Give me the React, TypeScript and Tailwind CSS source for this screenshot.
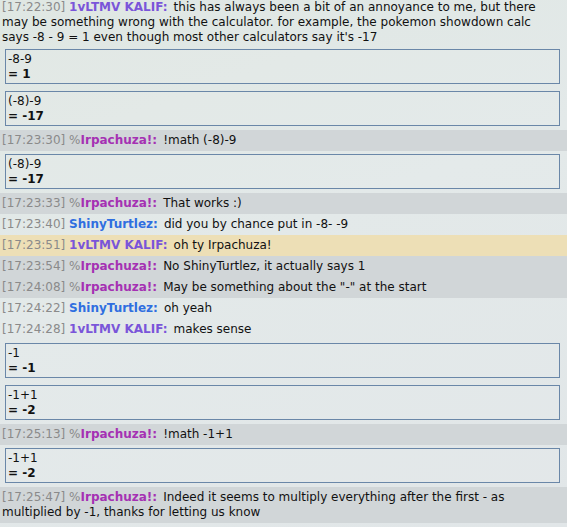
import React from 'react';

type Msg =
  | { kind: 'chat'; time: string; rank?: string; name: string; color: string; text: string; tone?: 'grey' | 'gold' }
  | { kind: 'box'; expr: string; result: string };

const KALIF = 'text-[#7a55d9]';
const SHINY = 'text-[#2f6ee0]';
const IRPA = 'text-[#a531b3]';

const log: Msg[] = [
  {
    kind: 'chat',
    time: '17:22:30',
    name: '1vLTMV KALIF',
    color: KALIF,
    text: "this has always been a bit of an annoyance to me, but there may be something wrong with the calculator. for example, the pokemon showdown calc says -8 - 9 = 1 even though most other calculators say it's -17",
  },
  { kind: 'box', expr: '-8-9', result: '1' },
  { kind: 'box', expr: '(-8)-9', result: '-17' },
  { kind: 'chat', time: '17:23:30', rank: '%', name: 'Irpachuza!', color: IRPA, text: '!math (-8)-9', tone: 'grey' },
  { kind: 'box', expr: '(-8)-9', result: '-17' },
  { kind: 'chat', time: '17:23:33', rank: '%', name: 'Irpachuza!', color: IRPA, text: 'That works :)', tone: 'grey' },
  { kind: 'chat', time: '17:23:40', name: 'ShinyTurtlez', color: SHINY, text: 'did you by chance put in -8- -9' },
  { kind: 'chat', time: '17:23:51', name: '1vLTMV KALIF', color: KALIF, text: 'oh ty Irpachuza!', tone: 'gold' },
  { kind: 'chat', time: '17:23:54', rank: '%', name: 'Irpachuza!', color: IRPA, text: 'No ShinyTurtlez, it actually says 1', tone: 'grey' },
  { kind: 'chat', time: '17:24:08', rank: '%', name: 'Irpachuza!', color: IRPA, text: 'May be something about the "-" at the start', tone: 'grey' },
  { kind: 'chat', time: '17:24:22', name: 'ShinyTurtlez', color: SHINY, text: 'oh yeah' },
  { kind: 'chat', time: '17:24:28', name: '1vLTMV KALIF', color: KALIF, text: 'makes sense' },
  { kind: 'box', expr: '-1', result: '-1' },
  { kind: 'box', expr: '-1+1', result: '-2' },
  { kind: 'chat', time: '17:25:13', rank: '%', name: 'Irpachuza!', color: IRPA, text: '!math -1+1', tone: 'grey' },
  { kind: 'box', expr: '-1+1', result: '-2' },
  {
    kind: 'chat',
    time: '17:25:47',
    rank: '%',
    name: 'Irpachuza!',
    color: IRPA,
    text: 'Indeed it seems to multiply everything after the first - as multiplied by -1, thanks for letting us know',
    tone: 'grey',
  },
];

export default function App() {
  return (
    <div className="h-[527px] w-[567px] overflow-hidden bg-[linear-gradient(160deg,#dfe7e3_0%,#e3e9e9_45%,#e1e6e8_100%)] font-['DejaVu_Sans',Verdana,sans-serif] text-[12px] leading-[15px] text-[#111]">
      {log.map((m, i) => {
        if (m.kind === 'box') {
          return (
            <div key={i} className="pt-[3px] pb-[4px] pl-[5px] pr-[7px]">
              <div className="border border-[#6a87a8] bg-white/5 pt-[2px] pb-[1px] pl-[2px]">
                <div>{m.expr}</div>
                <div className="font-bold">= {m.result}</div>
              </div>
            </div>
          );
        }
        const bg = m.tone === 'grey' ? 'bg-[#d1d6d8]' : m.tone === 'gold' ? 'bg-[#eddfb6]' : '';
        // the first line sits flush with the top edge, as the log is scrolled
        const pad = i === 0 ? 'pt-0 pb-[1px]' : 'py-[3px]';
        return (
          <div key={i} className={`${pad} pl-[2px] pr-[8px] ${bg}`}>
            <span className="text-[#8a8a8a]">[{m.time}] </span>
            {m.rank && <span className="text-[#8a8a8a]">{m.rank}</span>}
            <strong className={m.color}>{m.name}:</strong>
            <span className="ml-[6px]">{m.text}</span>
          </div>
        );
      })}
    </div>
  );
}
